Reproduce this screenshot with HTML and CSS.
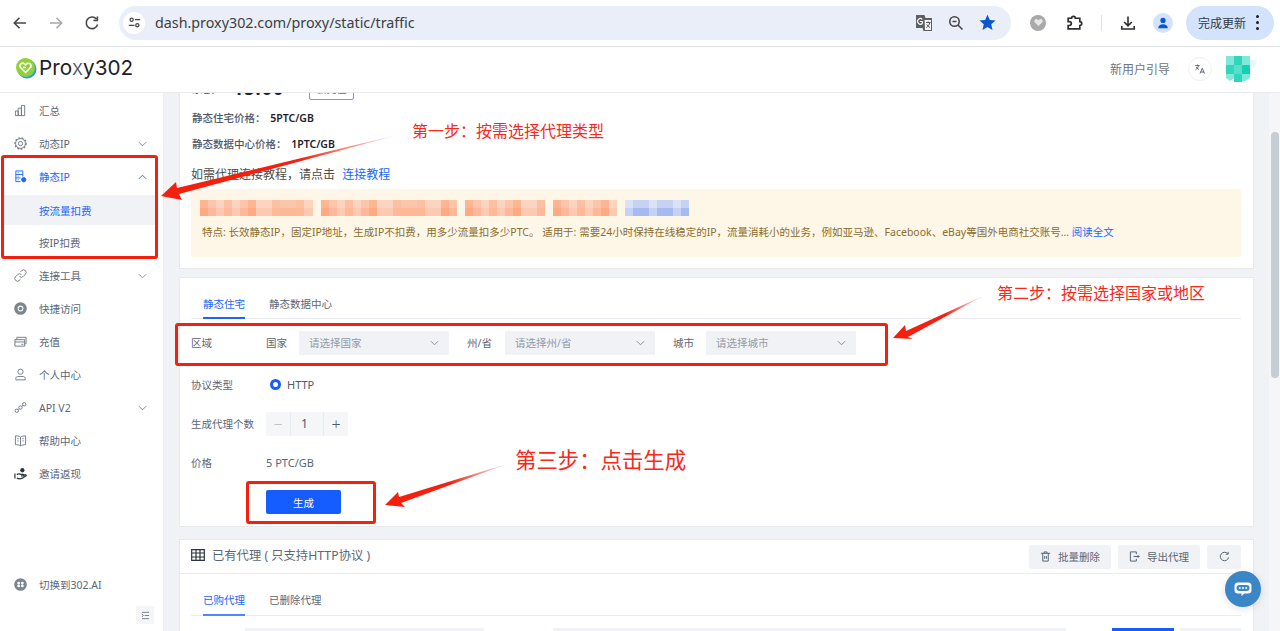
FILE: index.html
```html
<!DOCTYPE html>
<html lang="zh-CN">
<head>
    <meta charset="UTF-8">
    <meta name="viewport" content="width=device-width, initial-scale=1.0">
    <title>Proxy302 - 静态IP</title>
    <link rel="stylesheet" href="styles.css">
</head>
<body>
    <div class="toolbar">
        <div class="nav-btns">
            <svg class="tb-icon" viewBox="0 0 16 16"><path d="M14 8H2.500M7.500 2.800 2.300 8l5.200 5.200"/></svg>
            <svg class="tb-icon faded" viewBox="0 0 16 16"><path d="M2 8h11.500M8.500 2.800 13.700 8l-5.200 5.200"/></svg>
            <svg class="tb-icon" viewBox="0 0 16 16"><path d="M13.600 9.500A5.800 5.800 0 1 1 12.400 4M13.400 1.500v4h-4"/></svg>
        </div>
        <div class="omnibox">
            <span class="tune">
                <svg viewBox="0 0 16 16"><circle cx="4.500" cy="4.500" r="2"/><path d="M8.500 4.500H15M1 11.500h7"/><circle cx="11.500" cy="11.500" r="2"/></svg>
            </span>
            <span class="url">dash.proxy302.com/proxy/static/traffic</span>
            <div class="omni-actions">
                <svg class="omni-translate" viewBox="0 0 18 18"><path class="tr-back" d="M1 1h8.500l1 3H17v13H8.500l-1-3H1z"/><path class="tr-front" d="M9 5.500h7.500v11H9.500z"/><path class="tr-g" d="M7.300 5.300A2.800 2.800 0 1 0 7.300 9.500V7.500H5"/><path class="tr-x" d="M11 8.500h4.500M13.200 7.500v1M14.800 8.500c-.5 2.500-1.800 4-3.500 5M11.800 10.500c.8 1.300 1.800 2.300 3.200 3"/></svg>
                <svg class="tb-icon zoom-ic" viewBox="0 0 16 16"><circle cx="6.500" cy="6.500" r="4.700"/><path d="M4.500 6.500h4M10 10l4.500 4.500"/></svg>
                <svg class="star" viewBox="0 0 16 16"><path d="M8 .6l2.200 5 5.400.5-4.100 3.600 1.200 5.300L8 12.200 3.300 15l1.200-5.300L.4 6.100l5.400-.5z"/></svg>
            </div>
        </div>
        <div class="tb-right">
            <span class="ext-dot"><svg viewBox="0 0 16 16"><path d="M8 13 2.800 8a2.900 2.900 0 0 1 4-4.200L8 5l1.200-1.200a2.900 2.900 0 0 1 4 4.200z"/></svg></span>
            <svg class="tb-icon puzzle" viewBox="0 0 16 16"><path d="M2 4h3.200a1.800 1.800 0 0 1 3.600 0H13v3.200a1.800 1.800 0 0 1 0 3.600V14H2v-3.200h1.200a1.800 1.800 0 0 0 0-3.600H2z"/></svg>
            <span class="tb-sep"></span>
            <svg class="tb-icon download" viewBox="0 0 16 16"><path d="M8 1.500v9M4.200 7 8 10.800 11.800 7M1.800 11v3h12.400v-3"/></svg>
            <span class="profile"><svg viewBox="0 0 16 16"><circle cx="8" cy="5" r="3"/><path d="M2.500 14c0-3 2.500-4.500 5.500-4.500s5.500 1.500 5.500 4.500z"/></svg></span>
            <div class="update-pill"><span>完成更新</span><span class="dots"><i></i><i></i><i></i></span></div>
        </div>
    </div>

    <header class="app-header">
        <div class="logo">
            <svg viewBox="0 0 22 22"><circle class="logo-blue" cx="12" cy="12" r="9.500"/><circle class="logo-green" cx="10.500" cy="10.500" r="9.500"/><path class="logo-heart" d="M10.500 15.500 5.800 10.800a2.700 2.700 0 0 1 3.900-3.800l.8.800.8-.8a2.700 2.700 0 0 1 3.900 3.800zM8 10.500h3"/></svg>
            <span class="logo-text">Pro<span class="logo-x">x</span>y302</span>
        </div>
        <div class="header-right">
            <span class="guide">新用户引导</span>
            <span class="lang">
                <svg viewBox="0 0 16 16"><path d="M1.500 3.500h6M4.500 2v1.500M6 3.500C5.500 6 4 8 2 9M3 5.500c.8 1.500 2 2.500 3.500 3M8 14l3-7 3 7M9 12h4"/></svg>
            </span>
            <svg class="user-pic" viewBox="0 0 32 26">
                <path class="px1" d="M0 0h8v9H0zM16 0h8v9h-8zM0 18h8v4l-4 3-4-3z"/>
                <path class="px2" d="M8 0h8v9H8zM0 9h8v9H0zM8 18h8v8H8z"/>
                <path class="px3" d="M8 9h8v9H8z"/>
                <path class="px4" d="M16 9h8v9h-8z"/>
                <path class="px1" d="M16 18h8v4l-5 3h-3z"/>
                <path class="px5" d="M24 4h4l3 4-3 3h-4z"/>
            </svg>
        </div>
    </header>

    <div class="app-body">
        <aside class="sidebar">
            <nav class="menu">
                <a class="menu-item">
                    <svg class="m-icon" viewBox="0 0 14 14"><path d="M1.500 12.500v-5h3v5zM4.500 12.500v-8h3.500v8zM8 12.500v-11h3.500v11z"/></svg>
                    <span>汇总</span>
                </a>
                <a class="menu-item">
                    <svg class="m-icon" viewBox="0 0 14 14"><circle cx="7" cy="7" r="5.300"/><circle class="teeth" cx="7" cy="7" r="6"/><circle cx="7" cy="7" r="2.300"/></svg>
                    <span>动态IP</span>
                    <svg class="chev" viewBox="0 0 10 6"><path d="M1 1l4 4 4-4"/></svg>
                </a>
                <a class="menu-item active">
                    <svg class="m-icon" viewBox="0 0 14 14"><path d="M9.500 7V1H2v11.500h5M2 4.800h7.500M2 8.500h5M4 2.900h1M4 6.600h1M4 10.400h1"/><circle class="solid" cx="10.500" cy="10.500" r="2.300"/></svg>
                    <span>静态IP</span>
                    <svg class="chev" viewBox="0 0 10 6"><path d="M1 5l4-4 4 4"/></svg>
                </a>
                <a class="sub-item current">按流量扣费</a>
                <a class="sub-item">按IP扣费</a>
                <a class="menu-item">
                    <svg class="m-icon" viewBox="0 0 14 14"><path d="M6 8a2.700 2.700 0 0 0 4 0l2.300-2.300a2.800 2.800 0 0 0-4-4L7 3M8 6a2.700 2.700 0 0 0-4 0L1.700 8.300a2.800 2.800 0 0 0 4 4L7 11"/></svg>
                    <span>连接工具</span>
                    <svg class="chev" viewBox="0 0 10 6"><path d="M1 1l4 4 4-4"/></svg>
                </a>
                <a class="menu-item">
                    <svg class="m-icon" viewBox="0 0 14 14"><circle class="solid-grey" cx="7" cy="7" r="6.800"/><circle class="hole" cx="7" cy="7" r="3.100"/><circle class="solid-grey" cx="7" cy="7" r="2"/></svg>
                    <span>快捷访问</span>
                </a>
                <a class="menu-item">
                    <svg class="m-icon" viewBox="0 0 14 14"><path d="M1 5h10.500v7H1zM1 7.500h10.500M3 5V2.500h10V9.500h-1.500M8 10h2"/></svg>
                    <span>充值</span>
                </a>
                <a class="menu-item">
                    <svg class="m-icon" viewBox="0 0 14 14"><circle cx="7" cy="4" r="2.800"/><path d="M2 12.800V11c0-1 1-1.800 2-1.800h6c1 0 2 .8 2 1.800v1.800z"/></svg>
                    <span>个人中心</span>
                </a>
                <a class="menu-item">
                    <svg class="m-icon" viewBox="0 0 14 14"><circle cx="3" cy="10.500" r="1.800"/><circle cx="7" cy="7" r="1.800"/><circle cx="11" cy="3.500" r="1.800"/><path d="M4.400 9.300 5.600 8.200M8.400 5.800l1.200-1.100"/></svg>
                    <span>API V2</span>
                    <svg class="chev" viewBox="0 0 10 6"><path d="M1 1l4 4 4-4"/></svg>
                </a>
                <a class="menu-item">
                    <svg class="m-icon" viewBox="0 0 14 14"><path d="M1.500 2c2 0 4 .3 5.500 1.300C8.500 2.300 10.500 2 12.500 2v9.500c-2 0-4 .3-5.500 1.300-1.500-1-3.500-1.300-5.500-1.300zM7 3.300v9.500M3.500 5h1.500M3.500 7.500h1.500M9 5h1.500M9 7.500h1.500"/></svg>
                    <span>帮助中心</span>
                </a>
                <a class="menu-item">
                    <svg class="m-icon dark" viewBox="0 0 14 14"><path d="M1 7v5.500M3 8c2-1.500 3-.5 5 0h2c.8 0 .8 1.500 0 1.500H7.500M3 12c2 1 4 1 6 0l4-2.500c.5-.8-.3-1.500-1-1.200L10 9.500"/><circle class="solid-dark" cx="9" cy="3.500" r="2.300"/></svg>
                    <span>邀请返现</span>
                </a>
            </nav>
            <a class="menu-item switch">
                <svg class="m-icon" viewBox="0 0 14 14"><circle class="solid-grey" cx="7" cy="7" r="6.800"/><circle class="hole" cx="5" cy="5.500" r="1.500"/><circle class="hole" cx="9" cy="5.500" r="1.500"/><circle class="hole" cx="5" cy="8.500" r="1.500"/><circle class="hole" cx="9" cy="8.500" r="1.500"/></svg>
                <span>切换到302.AI</span>
            </a>
            <div class="collapse-row">
                <span class="collapse-btn"><svg viewBox="0 0 10 10"><path d="M1 1.500h8M4 5h5M1 8.500h8M1 3.500 2.800 5 1 6.500"/></svg></span>
            </div>
        </aside>

        <main class="content">
            <section class="card card-info">
                <div class="balance-row">
                    <span>余额：</span><b class="balance">15.00</b><span class="unit">PTC</span>
                    <button class="btn-outline">去充值</button>
                </div>
                <p class="price-row">静态住宅价格： <b>5PTC/GB</b></p>
                <p class="price-row">静态数据中心价格： <b>1PTC/GB</b></p>
                <p class="tutorial">如需代理连接教程，请点击 <a class="link">连接教程</a></p>
                <div class="notice">
                    <div class="mosaic-line">
                        <span class="mos w113"></span><span class="mos w136"></span><span class="mos w80"></span><span class="mos w64"></span><span class="mos blue w64"></span>
                    </div>
                    <p class="notice-text">特点: 长效静态IP，固定IP地址，生成IP不扣费，用多少流量扣多少PTC。 适用于: 需要24小时保持在线稳定的IP，流量消耗小的业务，例如亚马逊、Facebook、eBay等国外电商社交账号... <a class="link">阅读全文</a></p>
                </div>
            </section>

            <section class="card card-form">
                <div class="tabs">
                    <span class="tab selected">静态住宅</span>
                    <span class="tab">静态数据中心</span>
                </div>
                <div class="form-row region">
                    <label class="form-label">区域</label>
                    <span class="sel-label">国家</span>
                    <div class="select"><span>请选择国家</span><svg class="chev" viewBox="0 0 10 6"><path d="M1 1l4 4 4-4"/></svg></div>
                    <span class="sel-label next wide">州/省</span>
                    <div class="select"><span>请选择州/省</span><svg class="chev" viewBox="0 0 10 6"><path d="M1 1l4 4 4-4"/></svg></div>
                    <span class="sel-label next">城市</span>
                    <div class="select"><span>请选择城市</span><svg class="chev" viewBox="0 0 10 6"><path d="M1 1l4 4 4-4"/></svg></div>
                </div>
                <div class="form-row">
                    <label class="form-label">协议类型</label>
                    <span class="radio"></span><span class="radio-text">HTTP</span>
                </div>
                <div class="form-row">
                    <label class="form-label">生成代理个数</label>
                    <div class="stepper">
                        <span class="step muted">−</span><span class="step-val">1</span><span class="step">+</span>
                    </div>
                </div>
                <div class="form-row">
                    <label class="form-label">价格</label>
                    <span class="price-val">5 PTC/GB</span>
                </div>
                <div class="form-row submit-row">
                    <button class="btn-primary">生成</button>
                </div>
            </section>

            <section class="card card-list">
                <div class="list-head">
                    <svg class="grid-ic" viewBox="0 0 14 12"><path d="M.7.7h12.600v10.600H.7zM.7 4h12.600M.7 8h12.600M5 .7v10.600M9 .7v10.600"/></svg>
                    <h3 class="list-title">已有代理 ( 只支持HTTP协议 )</h3>
                    <div class="list-actions">
                        <button class="btn-grey"><svg viewBox="0 0 12 12"><path d="M1 2.500h10M3 2.500v8.500h6V2.500M4.500 2.500V1h3v1.500M5 5.500v3M7 5.500v3"/></svg>批量删除</button>
                        <button class="btn-grey"><svg viewBox="0 0 12 12"><path d="M8 3.500V1H1.500v10H8V8.500M5 6h6M9.500 4.500 11 6 9.500 7.500"/></svg>导出代理</button>
                        <button class="btn-grey icon-only"><svg viewBox="0 0 12 12"><path d="M10.500 7A4.600 4.600 0 1 1 9.500 3M10 1v2.500H7.500"/></svg></button>
                    </div>
                </div>
                <div class="tabs tabs-list">
                    <span class="tab selected">已购代理</span>
                    <span class="tab">已删除代理</span>
                </div>
                <div class="filter-row">
                    <span class="filter f1"></span>
                    <span class="filter f2"></span>
                    <span class="filter-blue"></span>
                    <span class="filter f3"></span>
                </div>
            </section>
        </main>

        <div class="scrollbar"><span class="thumb"></span></div>
    </div>

    <div class="chat-fab">
        <svg viewBox="0 0 20 20"><path class="bubble" d="M5 3.500h10a3.500 3.500 0 0 1 3.500 3.500v4a3.500 3.500 0 0 1-3.500 3.500h-3.500L8.500 17v-2.500H5A3.500 3.500 0 0 1 1.500 11V7A3.500 3.500 0 0 1 5 3.500z"/><rect class="bubble-in" x="3.500" y="6" width="13" height="6" rx="3"/><circle cx="6.800" cy="9" r="1"/><circle cx="10" cy="9" r="1"/><circle cx="13.200" cy="9" r="1"/></svg>
    </div>

    <!-- annotations drawn on top of the screenshot -->
    <div class="mark-box box-one"></div>
    <div class="mark-box box-two"></div>
    <div class="mark-box box-three"></div>
    <span class="mark-text text-one">第一步：按需选择代理类型</span>
    <span class="mark-text text-two">第二步：按需选择国家或地区</span>
    <span class="mark-text text-three">第三步：点击生成</span>
    <svg class="arrows" viewBox="0 0 1280 631">
        <defs>
            <linearGradient id="fadeOne" gradientUnits="userSpaceOnUse" x1="405" y1="133" x2="300" y2="160"><stop offset="0" stop-color="#fff"/><stop offset="1" stop-color="#f4200f"/></linearGradient>
            <linearGradient id="fadeTwo" gradientUnits="userSpaceOnUse" x1="985" y1="295" x2="945" y2="314"><stop offset="0" stop-color="#fff"/><stop offset="1" stop-color="#f4200f"/></linearGradient>
            <linearGradient id="fadeThree" gradientUnits="userSpaceOnUse" x1="510" y1="463" x2="450" y2="483"><stop offset="0" stop-color="#fff"/><stop offset="1" stop-color="#f4200f"/></linearGradient>
        </defs>
        <path fill="url(#fadeOne)" d="M405 133 179 194 182 200 161 196 176 182 177 188z"/>
        <path fill="url(#fadeTwo)" d="M985 295 908 337 913 339 893 338 905 325 906 331z"/>
        <path fill="url(#fadeThree)" d="M510 463 401 503 405 507 385 505 398 492 399 497z"/>
    </svg>
</body>
</html>
```

FILE: styles.css
```css
* {
    box-sizing: border-box;
}

body {
    margin: 0;
    height: 631px;
    overflow: hidden;
    position: relative;
    font-family: "Noto Sans", "Noto Sans CJK SC", sans-serif;
    font-size: 11px;
    color: #4e5969;
    background: #fff;
}

p, h3 {
    margin: 0;
    font-weight: normal;
}

button {
    font-family: inherit;
    border: none;
    padding: 0;
}

svg {
    display: block;
    flex: none;
}

.link {
    color: #1a66ff;
}

/* browser toolbar */
.toolbar {
    height: 47px;
    display: flex;
    align-items: center;
    padding: 0 6px 1px 12px;
    background: #fff;
    border-bottom: 1px solid #dfe1e5;
}

.nav-btns {
    display: flex;
    gap: 20px;
    width: 107px;
}

.tb-icon {
    width: 16px;
    height: 16px;
    fill: none;
    stroke: #474747;
    stroke-width: 1.6;
}

.tb-icon.faded {
    stroke: #a8a8a8;
}

.omnibox {
    width: 892px;
    height: 34px;
    border-radius: 17px;
    background: #e9eef8;
    display: flex;
    align-items: center;
    padding-left: 4px;
}

.tune {
    width: 22px;
    height: 22px;
    border-radius: 50%;
    background: #fff;
    display: flex;
    align-items: center;
    justify-content: center;
}

.tune svg {
    width: 13px;
    height: 13px;
    fill: none;
    stroke: #474747;
    stroke-width: 1.5;
}

.url {
    margin-left: 10px;
    font-size: 14.3px;
    color: #3c4043;
    white-space: nowrap;
}

.omni-actions {
    margin-left: auto;
    margin-right: 15px;
    display: flex;
    align-items: center;
    gap: 15px;
}

.omni-translate {
    width: 18px;
    height: 18px;
}

.tr-back {
    fill: #5f5f5f;
}

.tr-front {
    fill: #f4f4f4;
    stroke: #5f5f5f;
}

.tr-g {
    fill: none;
    stroke: #fff;
    stroke-width: 1.1;
}

.tr-x {
    fill: none;
    stroke: #555;
    stroke-width: 1;
}

.star {
    width: 17px;
    height: 17px;
    fill: #0b57d0;
}

.tb-right {
    flex: 1;
    display: flex;
    align-items: center;
    padding-left: 19px;
}

.ext-dot {
    width: 16px;
    height: 16px;
    border-radius: 50%;
    background: #a9a9a9;
    display: flex;
    align-items: center;
    justify-content: center;
}

.ext-dot svg {
    width: 11px;
    height: 11px;
    fill: #e8e8e8;
}

.puzzle {
    margin-left: 20px;
    width: 17px;
    height: 17px;
    stroke: #2f2f2f;
}

.tb-sep {
    width: 1px;
    height: 16px;
    margin: 0 18px 0 18px;
    background: #d3e3fd;
}

.download {
    stroke: #2f2f2f;
}

.profile {
    margin-left: 17px;
    width: 20px;
    height: 20px;
    border-radius: 50%;
    background: #d3e3fd;
    display: flex;
    align-items: center;
    justify-content: center;
}

.profile svg {
    width: 14px;
    height: 14px;
    fill: #0b57d0;
}

.update-pill {
    margin-left: 13px;
    width: 88px;
    height: 34px;
    border-radius: 17px;
    background: #d3e3fd;
    display: flex;
    align-items: center;
    padding-left: 12px;
    font-size: 12px;
    color: #2f3a4a;
}

.dots {
    margin-left: 10px;
    display: flex;
    flex-direction: column;
    gap: 3px;
}

.dots i {
    width: 3px;
    height: 3px;
    border-radius: 50%;
    background: #1f1f1f;
}

/* app header */
.app-header {
    height: 46px;
    display: flex;
    align-items: center;
    padding: 0 22px 1px 15px;
    background: #fff;
    border-bottom: 1px solid #e8e9ec;
    position: relative;
    z-index: 2;
}

.logo {
    display: flex;
    align-items: center;
    gap: 2px;
    margin-bottom: 3px;
}

.logo svg {
    width: 22px;
    height: 22px;
}

.logo-blue {
    fill: #2f9be8;
}

.logo-green {
    fill: #8fd136;
}

.logo-heart {
    fill: none;
    stroke: #fff;
    stroke-width: 1.6;
}

.logo-text {
    font-family: "Inter", "Liberation Sans", sans-serif;
    font-size: 20.7px;
    color: #1d2129;
}

.logo-x {
    color: #44505c;
    font-weight: 300;
}

.header-right {
    margin-left: auto;
    display: flex;
    align-items: center;
}

.guide {
    font-size: 12px;
    color: #6e7580;
}

.lang {
    margin-left: 18px;
    width: 24px;
    height: 24px;
    border: 1px solid #f0f1f3;
    border-radius: 50%;
    display: flex;
    align-items: center;
    justify-content: center;
}

.lang svg {
    width: 12px;
    height: 12px;
    fill: none;
    stroke: #4e5969;
    stroke-width: 1.2;
}

.user-pic {
    margin-left: 14px;
    width: 32px;
    height: 26px;
}

.px1 { fill: #80e8d8; }
.px2 { fill: #31d6ba; }
.px3 { fill: #57dfca; }
.px4 { fill: #0ed2b0; }
.px5 { fill: #e3faf6; }

/* page body */
.app-body {
    height: 538px;
    display: flex;
    background: #f1f2f5;
}

.sidebar {
    width: 164px;
    flex: none;
    background: #fff;
    border-right: 1px solid #eceef1;
    display: flex;
    flex-direction: column;
    padding-top: 1px;
}

.menu {
    display: flex;
    flex-direction: column;
}

.menu-item {
    height: 33px;
    display: flex;
    align-items: center;
    padding-left: 14px;
    gap: 12px;
    font-size: 10.5px;
    color: #5c6675;
}

.menu-item .chev {
    margin-left: auto;
    margin-right: 16px;
}

.m-icon {
    width: 13px;
    height: 13px;
    fill: none;
    stroke: #6f7885;
    stroke-width: 1;
}

.m-icon.dark {
    stroke: #2c3340;
    stroke-width: 1.3;
}

.teeth {
    stroke-width: 1.5;
    stroke-dasharray: 1.8 1.8;
}

.solid {
    fill: #1a66ff;
}

.solid-grey {
    fill: #7d8591;
    stroke: none;
}

.solid-dark {
    fill: #2c3340;
    stroke: none;
}

.hole {
    fill: #fff;
    stroke: none;
}

.chev {
    width: 9px;
    height: 6px;
    fill: none;
    stroke: #7f8794;
    stroke-width: 1;
}

.menu-item.active {
    color: #1a66ff;
}

.menu-item.active .m-icon {
    stroke: #1a66ff;
}

.menu-item.active .chev {
    stroke: #1a66ff;
}

.sub-item {
    height: 33px;
    margin-left: 4px;
    width: 151px;
    display: flex;
    align-items: center;
    padding-left: 35px;
    font-size: 10.5px;
    color: #5c6675;
}

.sub-item.current {
    height: 30px;
    margin-top: 2px;
    margin-bottom: 1px;
    background: #f1f2f5;
    color: #1a66ff;
}

.switch {
    margin-top: auto;
}

.collapse-row {
    display: flex;
    justify-content: flex-end;
    padding: 5px 9px 7px 0;
}

.collapse-btn {
    width: 18px;
    height: 18px;
    background: #f6f6f7;
    display: flex;
    align-items: center;
    justify-content: center;
}

.collapse-btn svg {
    width: 9px;
    height: 9px;
    fill: none;
    stroke: #6f7885;
}

.content {
    flex: 1;
    min-width: 0;
    padding: 0 15px;
    overflow: hidden;
}

.card {
    background: #fff;
    border: 1px solid #e8e9ec;
    padding: 0 12px 0 11px;
}

/* top card, scrolled part way under the header */
.card-info {
    margin-top: -17px;
    height: 193px;
    border-top: none;
}

.balance-row {
    height: 24px;
    display: flex;
    align-items: center;
    gap: 6px;
    padding-left: 1px;
    margin-bottom: 5px;
    font-weight: 500;
}

.balance {
    font-size: 18px;
    letter-spacing: 1px;
    color: #1d2129;
    margin-left: 2px;
}

.unit {
    color: #8a919c;
}

.btn-outline {
    width: 45px;
    height: 24px;
    margin-left: -7px;
    background: #fff;
    border: 1px solid #6e9bf5;
    border-radius: 2px;
    color: #1a66ff;
    font-size: 10px;
}

.price-row {
    height: 26px;
    line-height: 26px;
    padding-left: 1px;
    font-weight: 500;
    font-size: 10.5px;
    color: #4e5969;
}

.price-row b {
    margin-left: 2px;
    font-weight: 600;
    color: #1d2129;
}

.tutorial {
    margin-top: 8px;
    height: 20px;
    line-height: 20px;
    font-size: 12px;
    color: #4c4c4c;
}

.tutorial .link {
    margin-left: 4px;
}

.notice {
    margin-top: 4px;
    height: 68px;
    padding: 11px 11px 0 9px;
    background: #fef6e7;
}

.mosaic-line {
    display: flex;
    gap: 8px;
}

.mos {
    height: 16px;
    background:
        repeating-linear-gradient(90deg, rgba(255, 120, 60, .22) 0 8px, transparent 8px 24px),
        repeating-linear-gradient(90deg, transparent 0 16px, rgba(255, 255, 255, .25) 16px 40px),
        linear-gradient(180deg, #fdc6aa 0 8px, #fdb997 8px 16px);
}

.mos.blue {
    background:
        repeating-linear-gradient(90deg, rgba(255, 255, 255, .35) 0 8px, transparent 8px 24px),
        linear-gradient(180deg, #c5d2f3 0 8px, #a5bbf0 8px 16px);
}

.w113 { width: 113px; }
.w136 { width: 136px; }
.w80 { width: 80px; }
.w64 { width: 64px; }

.notice-text {
    margin-top: 8px;
    margin-left: 2px;
    height: 16px;
    line-height: 16px;
    font-size: 10.5px;
    color: #8a6c2c;
    white-space: nowrap;
}

/* form card */
.card-form {
    margin-top: 8px;
    height: 250px;
}

.tabs {
    height: 41px;
    display: flex;
    gap: 24px;
    padding-left: 12px;
    border-bottom: 1px solid #ebecf0;
}

.tab {
    height: 41px;
    line-height: 52px;
    font-size: 10.5px;
    color: #5c6675;
}

.tab.selected {
    color: #1a66ff;
    border-bottom: 2px solid #1a66ff;
}

.form-row {
    height: 39px;
    display: flex;
    align-items: center;
}

.form-row.region {
    height: 46px;
    padding-top: 1px;
}

.form-label {
    width: 75px;
    font-size: 10.5px;
    color: #5c6675;
}

.sel-label {
    width: 33px;
    font-size: 10.5px;
    color: #5c6675;
}

.sel-label.next {
    margin-left: 18px;
}

.sel-label.wide {
    width: 38px;
}

.select {
    width: 150px;
    height: 24px;
    background: #f1f2f5;
    display: flex;
    align-items: center;
    justify-content: space-between;
    padding: 0 10px;
    font-size: 10.5px;
    color: #939aa6;
}

.radio {
    margin-left: 4px;
    width: 11px;
    height: 11px;
    border: 3px solid #1a5cff;
    border-radius: 50%;
    background: #fff;
}

.radio-text {
    margin-left: 6px;
    font-size: 11px;
    color: #4e5969;
}

.stepper {
    width: 82px;
    height: 24px;
    display: flex;
    background: #f5f6f7;
    font-size: 12px;
    color: #4e5969;
}

.step {
    width: 24px;
    line-height: 24px;
    text-align: center;
    font-size: 16px;
    font-weight: 300;
}

.step.muted {
    color: #b5bac2;
}

.step-val {
    flex: 1;
    line-height: 24px;
    padding-left: 10px;
    border-left: 1px solid #eaebee;
    border-right: 1px solid #eaebee;
}

.price-val {
    font-size: 11px;
    color: #5c6675;
}

.submit-row {
    padding-left: 75px;
    height: 24px;
    margin-top: 8px;
}

.btn-primary {
    width: 75px;
    height: 24px;
    border-radius: 2px;
    background: #165dff;
    color: #fff;
    font-size: 10.5px;
}

/* proxy list card */
.card-list {
    margin-top: 12px;
    height: 160px;
}

.list-head {
    height: 34px;
    margin: 0 -12px 0 -11px;
    padding: 0 12px 0 11px;
    display: flex;
    align-items: center;
    border-bottom: 1px solid #ebecf0;
}

.grid-ic {
    width: 14px;
    height: 12px;
    margin-bottom: 3px;
    fill: none;
    stroke: #2c3340;
    stroke-width: 1.2;
}

.list-title {
    margin-left: 7px;
    margin-bottom: 3px;
    font-size: 12.3px;
    color: #5c6675;
}

.list-actions {
    margin-left: auto;
    display: flex;
    gap: 7px;
}

.btn-grey {
    width: 82px;
    height: 24px;
    background: #f1f2f5;
    border-radius: 2px;
    display: flex;
    align-items: center;
    justify-content: center;
    gap: 7px;
    font-size: 10.5px;
    color: #5c6675;
}

.btn-grey svg {
    width: 11px;
    height: 11px;
    fill: none;
    stroke: #4e5969;
}

.btn-grey.icon-only {
    width: 34px;
}

.tabs-list {
    height: 42px;
}

.tabs-list .tab {
    height: 42px;
}

.tabs-list .tab.selected {
    border-bottom-color: #4f86ff;
}

.filter-row {
    margin-top: 12px;
    display: flex;
    padding-left: 54px;
}

.filter {
    height: 24px;
    background: #f1f2f5;
}

.f1 { width: 239px; }
.f2 { width: 513px; margin-left: 69px; }
.f3 { width: 61px; margin-left: 6px; }

.filter-blue {
    width: 62px;
    height: 24px;
    margin-left: 46px;
    background: #165dff;
}

.scrollbar {
    width: 11px;
    flex: none;
    background: #f6f6f8;
    padding: 39px 1px 0 2px;
}

.thumb {
    display: block;
    height: 246px;
    border-radius: 4px;
    background: #c8ccd3;
}

.chat-fab {
    position: absolute;
    left: 1225px;
    top: 571px;
    width: 36px;
    height: 36px;
    border-radius: 50%;
    background: #3b86c6;
    box-shadow: 0 2px 8px rgba(0, 0, 0, .12);
    display: flex;
    align-items: center;
    justify-content: center;
}

.chat-fab svg {
    width: 20px;
    height: 20px;
    fill: #fff;
}

.bubble-in {
    fill: #3b86c6;
}

/* red annotations */
.mark-box {
    position: absolute;
    border: 3px solid #f4200f;
    border-radius: 3px;
}

.box-one {
    left: 1px;
    top: 155px;
    width: 157px;
    height: 104px;
}

.box-two {
    left: 175px;
    top: 323px;
    width: 713px;
    height: 43px;
}

.box-three {
    left: 246px;
    top: 481px;
    width: 130px;
    height: 43px;
}

.mark-text {
    position: absolute;
    color: #f8281a;
    font-family: "Noto Sans CJK SC", sans-serif;
    font-size: 16px;
    line-height: 22px;
    white-space: nowrap;
}

.text-one {
    left: 412px;
    top: 119px;
}

.text-two {
    left: 997px;
    top: 281px;
}

.text-three {
    left: 515px;
    top: 444px;
    font-size: 21.4px;
    line-height: 30px;
}

.arrows {
    position: absolute;
    left: 0;
    top: 0;
    width: 1280px;
    height: 631px;
    pointer-events: none;
}
```
